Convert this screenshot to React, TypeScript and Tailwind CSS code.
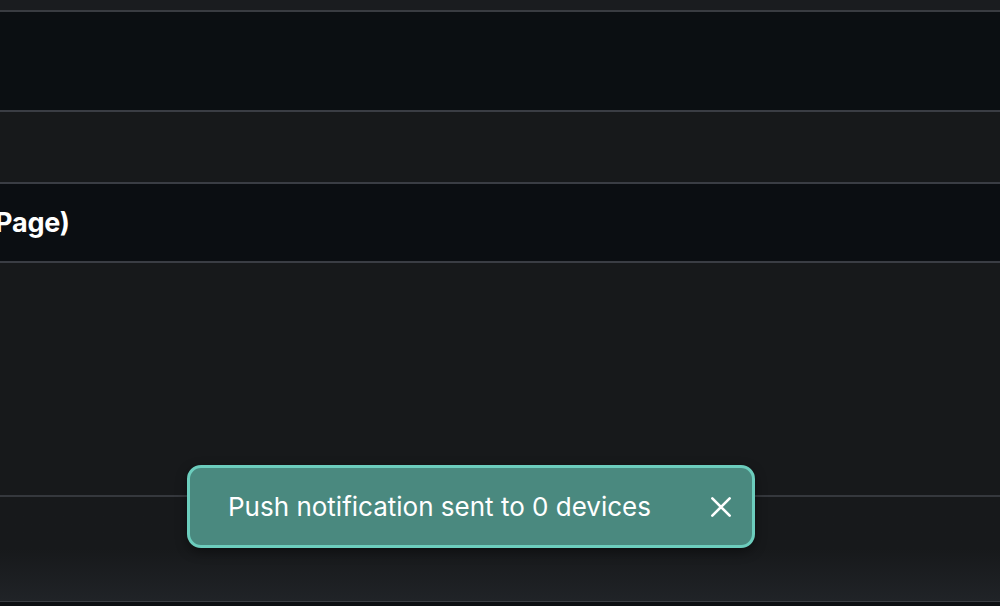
import React from "react";

export default function App() {
  return (
    <div className="relative w-[1000px] h-[606px] overflow-hidden bg-[#0d0f12] font-['Inter',sans-serif]">
      <div className="flex flex-col">
        <div className="h-[12px] bg-[#1a1c1f] border-b-2 border-[#393c41]" />
        <div className="h-[100px] bg-[#0b0f12] border-b-2 border-[#3a3d44]" />
        <div className="h-[72px] bg-[#17191b] border-b-2 border-[#3a3d44]" />
        <div className="h-[79px] bg-[#0b0e12] border-b-2 border-[#3a3d44] flex items-center">
          <span className="text-white font-bold text-[27px] -ml-[5px] leading-none tracking-[-0.2px]">Page)</span>
        </div>
        <div className="h-[234px] bg-[#17191b] border-b-2 border-[#35383d]" />
        <div className="h-[105px] bg-gradient-to-b from-[#17191b] via-[#17191b] to-[#202327] border-b border-[#3a3d42]" />
      </div>
      <div className="absolute left-[187px] top-[465px] w-[568px] h-[83px] rounded-[14px] border-[3px] border-[#6ccdbd] bg-[#4a897f] shadow-[0_4px_12px_rgba(0,0,0,0.4)] flex items-center pl-[38px] pr-[18px]">
        <span className="flex-1 text-white text-[26px] leading-none">Push notification sent to 0 devices</span>
        <svg width="26" height="26" viewBox="0 0 24 24" fill="none" stroke="white" strokeWidth="2.4" strokeLinecap="round">
          <path d="M4 4L20 20M20 4L4 20" />
        </svg>
      </div>
    </div>
  );
}
